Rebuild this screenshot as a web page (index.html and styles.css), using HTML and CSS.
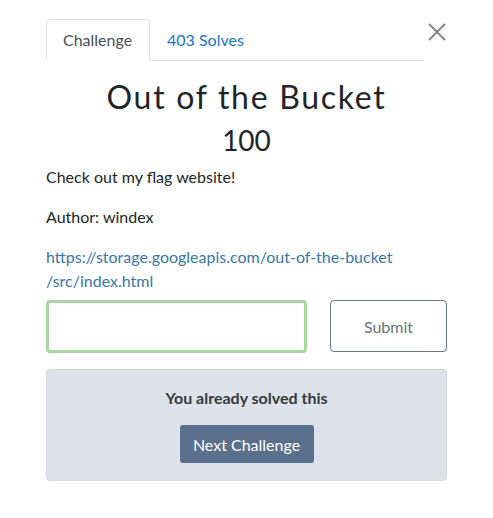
FILE: index.html
```html
<!DOCTYPE html>
<html>
<head>
<meta charset="utf-8">
<link rel="stylesheet" href="styles.css">
</head>
<body>
<div class="modal">
  <div class="head">
    <ul class="tabs">
      <li class="tab active">Challenge</li>
      <li class="tab link">403 Solves</li>
    </ul>
    <button class="close" aria-label="Close">
      <svg width="18" height="18" viewBox="0 0 18 18"><path d="M1 1L17 17M17 1L1 17" stroke="#858585" stroke-width="2" fill="none"/></svg>
    </button>
  </div>
  <h2 class="title">Out of the Bucket</h2>
  <h3 class="value">100</h3>
  <div class="desc">
    <p>Check out my flag website!</p>
    <p>Author: windex</p>
    <p><a href="#">https://storage.googleapis.com/out-of-the-bucket<br>/src/index.html</a></p>
  </div>
  <div class="submit-row">
    <input class="flag" type="text">
    <button class="submit">Submit</button>
  </div>
  <div class="solved">
    <div class="solved-text">You already solved this</div>
    <button class="next">Next Challenge</button>
  </div>
</div>
</body>
</html>
```
FILE: styles.css
```css
* { box-sizing: border-box; }
body {
  margin: 0;
  background: #fff;
  font-family: Lato, "Open Sans", sans-serif;
  color: #212529;
  font-size: 16px;
  line-height: 1.5;
}
.modal {
  padding: 19px 46px 0 46px;
}
.head {
  display: flex;
  align-items: flex-start;
}
.tabs {
  list-style: none;
  margin: 0;
  padding: 0;
  display: flex;
  width: 378px;
  border-bottom: 1px solid #dee2e6;
}
.tab {
  padding: 8px 16px;
  font-size: 16px;
  line-height: 24px;
  border: 1px solid transparent;
  border-top-left-radius: 4px;
  border-top-right-radius: 4px;
  margin-bottom: -1px;
}
.tab.active {
  color: #495057;
  border-color: #dee2e6 #dee2e6 #fff;
  width: 104px;
}
.tab.link { color: #1a73c8; }
.close {
  margin: 4px 0 0 4px;
  padding: 0;
  border: 0;
  background: none;
  width: 18px;
  height: 18px;
  display: flex;
}
.title {
  margin: 17px 0 0 0;
  text-align: center;
  font-size: 32px;
  font-weight: 400;
  line-height: 38px;
  letter-spacing: 1.7px;
}
.value {
  margin: 7px 0 0 0;
  text-align: center;
  font-size: 28px;
  font-weight: 400;
  line-height: 34px;
}
.desc {
  margin-top: 8px;
}
.desc p {
  margin: 0 0 16px 0;
  font-size: 16px;
  line-height: 24px;
}
.desc p:last-child { margin-bottom: 0; }
.desc a {
  color: #3a76a8;
  text-decoration: none;
}
.submit-row {
  display: flex;
  justify-content: space-between;
  margin-top: 7px;
}
.flag {
  width: 261px;
  height: 53px;
  border: 3px solid #a8d5a2;
  border-radius: 4px;
  outline: none;
  font-family: inherit;
}
.submit {
  width: 117px;
  height: 52px;
  background: #fff;
  border: 1px solid #6c757d;
  border-radius: 4px;
  color: #6c757d;
  font-family: inherit;
  font-size: 16px;
}
.solved {
  margin-top: 16px;
  background: #dee2ea;
  border: 1px solid #d3d7df;
  border-radius: 4px;
  height: 112px;
  display: flex;
  flex-direction: column;
  align-items: center;
  padding-top: 16px;
}
.solved-text {
  font-weight: 700;
  font-size: 16px;
  line-height: 24px;
  color: #343a40;
}
.next {
  margin-top: 15px;
  background: #5a6f8c;
  color: #fff;
  border: 0;
  border-radius: 3px;
  width: 134px;
  height: 38px;
  font-family: inherit;
  font-size: 16px;
}
```
